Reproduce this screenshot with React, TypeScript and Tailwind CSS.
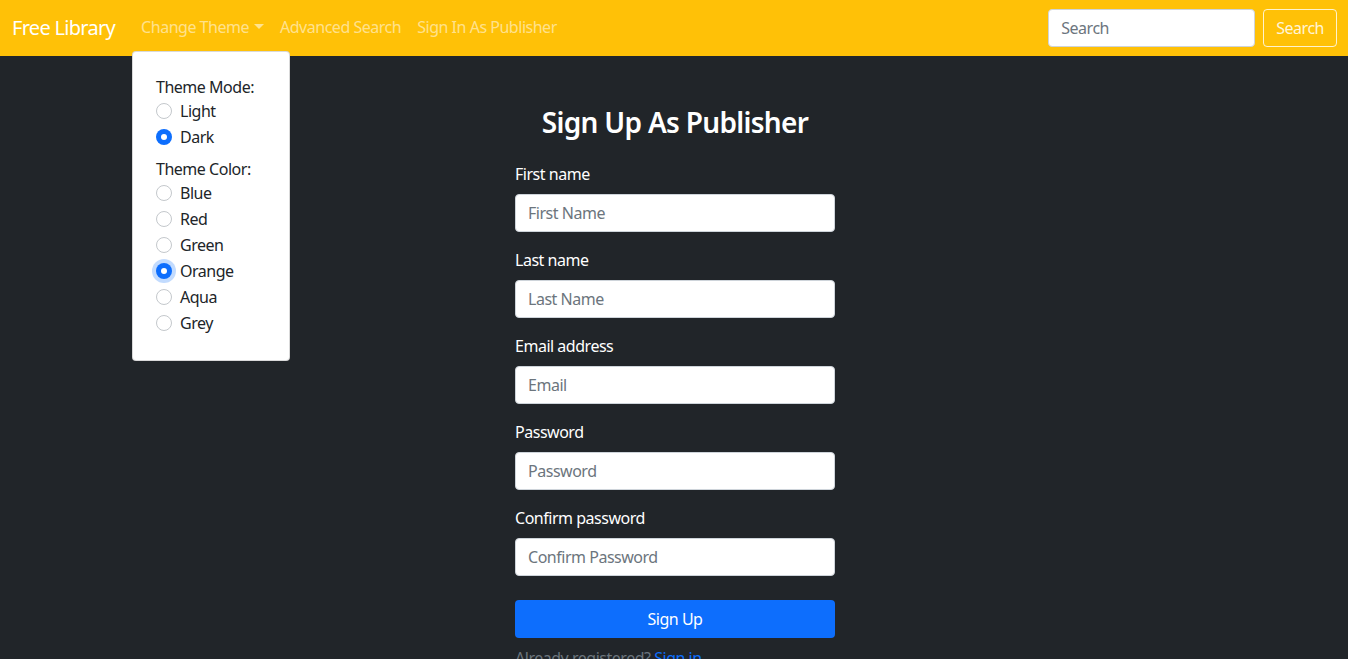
import React from "react";

const Radio = ({ checked, focus }: { checked?: boolean; focus?: boolean }) => (
  <span
    className={
      "w-4 h-4 rounded-full shrink-0 flex items-center justify-center " +
      (checked ? "bg-[#0d6efd]" : "bg-white border border-[#c4c8cc]") +
      (focus ? " shadow-[0_0_0_4px_rgba(13,110,253,0.25)]" : "")
    }
  >
    {checked && <span className="block w-[6px] h-[6px] rounded-full bg-white" />}
  </span>
);

const RadioRow = ({ label, checked, focus }: { label: string; checked?: boolean; focus?: boolean }) => (
  <div className="flex items-center gap-2 h-6 mb-[2px]">
    <Radio checked={checked} focus={focus} />
    <span>{label}</span>
  </div>
);

const Field = ({ label, placeholder }: { label: string; placeholder: string }) => (
  <div className="mb-4">
    <label className="block mb-2 text-white leading-6">{label}</label>
    <input
      className="w-full h-[38px] rounded-[4px] bg-white border border-[#ced4da] px-3 text-[#212529] placeholder:text-[#6c757d] outline-none tracking-[-0.03em]"
      placeholder={placeholder}
    />
  </div>
);

export default function App() {
  return (
    <div
      className="min-h-[659px] bg-[#212529] text-base relative tracking-[-0.03em]"
      style={{ fontFamily: '"Noto Sans", sans-serif' }}
    >
      <nav className="h-14 bg-[#ffc107] flex items-center px-3">
        <span className="text-white text-xl mr-[18px] leading-[30px] pb-[1px] tracking-[-0.035em]">Free Library</span>
        <div className="flex items-center text-[rgba(255,255,255,0.55)] leading-6 pb-[3px]">
          <span className="px-2 flex items-center">
            Change Theme
            <span className="ml-[5px] inline-block w-0 h-0 border-l-[5px] border-r-[5px] border-t-[5px] border-l-transparent border-r-transparent border-t-[rgba(255,255,255,0.55)]" />
          </span>
          <span className="px-2">Advanced Search</span>
          <span className="px-2">Sign In As Publisher</span>
        </div>
        <div className="ml-auto flex items-center gap-2 pb-[1px]">
          <input
            className="w-[207px] h-[38px] rounded-[4px] bg-white border border-[#ced4da] px-3 text-[#212529] placeholder:text-[#6c757d] outline-none tracking-[-0.03em]"
            placeholder="Search"
          />
          <button className="h-[38px] px-3 rounded-[4px] border border-[rgba(255,255,255,0.8)] text-[rgba(255,255,255,0.85)] tracking-[-0.03em] mr-[-1px]">
            Search
          </button>
        </div>
      </nav>

      <div className="absolute left-[132px] top-[51px] w-[158px] h-[310px] bg-white rounded-[4px] border border-[rgba(0,0,0,0.15)] pt-[23px] pl-[23px] text-[#212529] leading-6">
        <div>Theme Mode:</div>
        <RadioRow label="Light" />
        <RadioRow label="Dark" checked />
        <div className="mt-2">Theme Color:</div>
        <RadioRow label="Blue" />
        <RadioRow label="Red" />
        <RadioRow label="Green" />
        <RadioRow label="Orange" checked focus />
        <RadioRow label="Aqua" />
        <RadioRow label="Grey" />
      </div>

      <main className="flex justify-center pt-[49px] pl-[2px]">
        <div className="w-[320px]">
          <h3 className="text-center text-white text-[28px] font-semibold leading-[34px] mb-[23px] tracking-[-0.025em]">
            Sign Up As Publisher
          </h3>
          <Field label="First name" placeholder="First Name" />
          <Field label="Last name" placeholder="Last Name" />
          <Field label="Email address" placeholder="Email" />
          <Field label="Password" placeholder="Password" />
          <Field label="Confirm password" placeholder="Confirm Password" />
          <button className="mt-2 w-full h-[38px] rounded-[4px] bg-[#0d6efd] text-white tracking-[-0.03em]">Sign Up</button>
          <p className="mt-2 text-[#6c757d] leading-6">
            Already registered? <span className="text-[#0d6efd]">Sign in</span>
          </p>
        </div>
      </main>
    </div>
  );
}
